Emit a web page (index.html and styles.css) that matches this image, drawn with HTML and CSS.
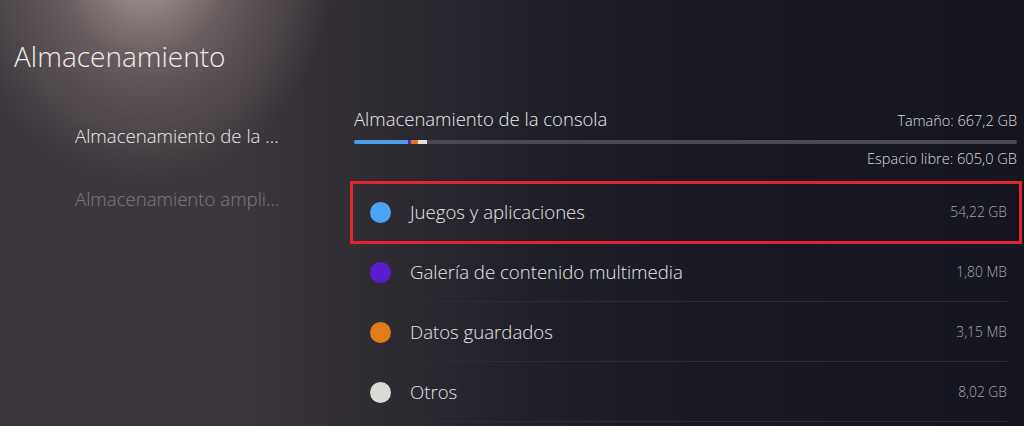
FILE: index.html
```html
<!DOCTYPE html>
<html lang="es">
<head>
<meta charset="utf-8">
<title>Almacenamiento</title>
<link rel="stylesheet" href="styles.css">
</head>
<body>
<div class="app">
  <aside class="sidebar">
    <h1 class="title">Almacenamiento</h1>
    <nav class="nav">
      <div class="nav-item active">Almacenamiento de la ...</div>
      <div class="nav-item dim">Almacenamiento ampli...</div>
    </nav>
  </aside>
  <main class="main">
    <div class="head">
      <div class="head-title">Almacenamiento de la consola</div>
      <div class="head-size">Tamaño: 667,2 GB</div>
    </div>
    <div class="bar">
      <span class="seg seg-blue"></span>
      <span class="seg seg-purple"></span>
      <span class="seg seg-orange"></span>
      <span class="seg seg-white"></span>
    </div>
    <div class="free">Espacio libre: 605,0 GB</div>
    <ul class="list">
      <li class="row selected">
        <span class="dot dot-blue"></span>
        <div class="content"><span class="label">Juegos y aplicaciones</span><span class="value">54,22 GB</span></div>
      </li>
      <li class="row">
        <span class="dot dot-purple"></span>
        <div class="content"><span class="label">Galería de contenido multimedia</span><span class="value">1,80 MB</span></div>
      </li>
      <li class="row">
        <span class="dot dot-orange"></span>
        <div class="content"><span class="label">Datos guardados</span><span class="value">3,15 MB</span></div>
      </li>
      <li class="row">
        <span class="dot dot-white"></span>
        <div class="content"><span class="label">Otros</span><span class="value">8,02 GB</span></div>
      </li>
    </ul>
  </main>
</div>
</body>
</html>
```
FILE: styles.css
```css
* { box-sizing: border-box; }
html, body { margin: 0; padding: 0; }
body {
  width: 1024px;
  height: 426px;
  overflow: hidden;
  font-family: "Open Sans", "Noto Sans", sans-serif;
  font-weight: 300;
  color: #e8e8ea;
  background:
    radial-gradient(ellipse 190px 220px at 145px -40px, rgba(200,180,175,0.85), rgba(165,145,142,0.42) 45%, rgba(120,105,105,0) 100%),
    linear-gradient(90deg, #3b373d 0px, #3c373c 230px, #302d33 360px, #1f1f28 540px, #181923 700px, #14151e 1024px);
}
.app {
  display: flex;
  height: 426px;
}
.sidebar {
  width: 354px;
  flex: none;
  padding-top: 37px;
}
.title {
  margin: 0 0 0 14px;
  font-size: 28px;
  line-height: 38px;
  font-weight: 300;
  color: #f0eeee;
}
.nav {
  margin-top: 48px;
  padding-left: 75px;
}
.nav-item {
  font-size: 18.6px;
  line-height: 26px;
  height: 63px;
  white-space: nowrap;
}
.nav-item.active { color: #ecebec; }
.nav-item.dim { color: #7f797e; }
.main {
  flex: 1;
  padding-top: 106px;
  padding-right: 7px;
}
.head {
  display: flex;
  justify-content: space-between;
  align-items: baseline;
}
.head-title {
  font-size: 18.5px;
  line-height: 26px;
  color: #ebebed;
}
.head-size {
  font-size: 14.5px;
  color: #dcdcdf;
}
.bar {
  margin-top: 8px;
  height: 4px;
  border-radius: 2px;
  background: #4a4a52;
  display: flex;
  overflow: hidden;
}
.seg { display: block; height: 100%; }
.seg-blue { width: 54px; background: #4a9fe8; }
.seg-purple { width: 3px; background: #5c22d0; }
.seg-orange { width: 7px; background: #e07a22; }
.seg-white { width: 9px; background: #e6e1dc; }
.free {
  margin-top: 5px;
  text-align: right;
  font-size: 14.6px;
  line-height: 18px;
  color: #dcdcdf;
}
.list {
  list-style: none;
  margin: 15px 0 0 0;
  padding: 0;
}
.row {
  position: relative;
  display: flex;
  align-items: center;
  height: 60px;
  padding-left: 16px;
  padding-right: 10px;
}
.row.selected::after {
  content: "";
  position: absolute;
  left: -4px;
  right: -5px;
  top: -1px;
  bottom: -2px;
  border: 3px solid #e3242f;
}
.dot {
  flex: none;
  width: 21px;
  height: 21px;
  border-radius: 50%;
  margin-right: 19px;
}
.dot-blue { background: #4aa6f5; }
.dot-purple { background: #5a1ccf; }
.dot-orange { background: #e17b1c; }
.dot-white { background: #dcdad6; }
.content {
  flex: 1;
  height: 100%;
  display: flex;
  align-items: center;
  justify-content: space-between;
  border-bottom: 1px solid #2b2c35;
}
.label {
  font-size: 18.6px;
  color: #e6e6e8;
}
.value {
  font-size: 13.8px;
  color: #a9a9b0;
}
```
